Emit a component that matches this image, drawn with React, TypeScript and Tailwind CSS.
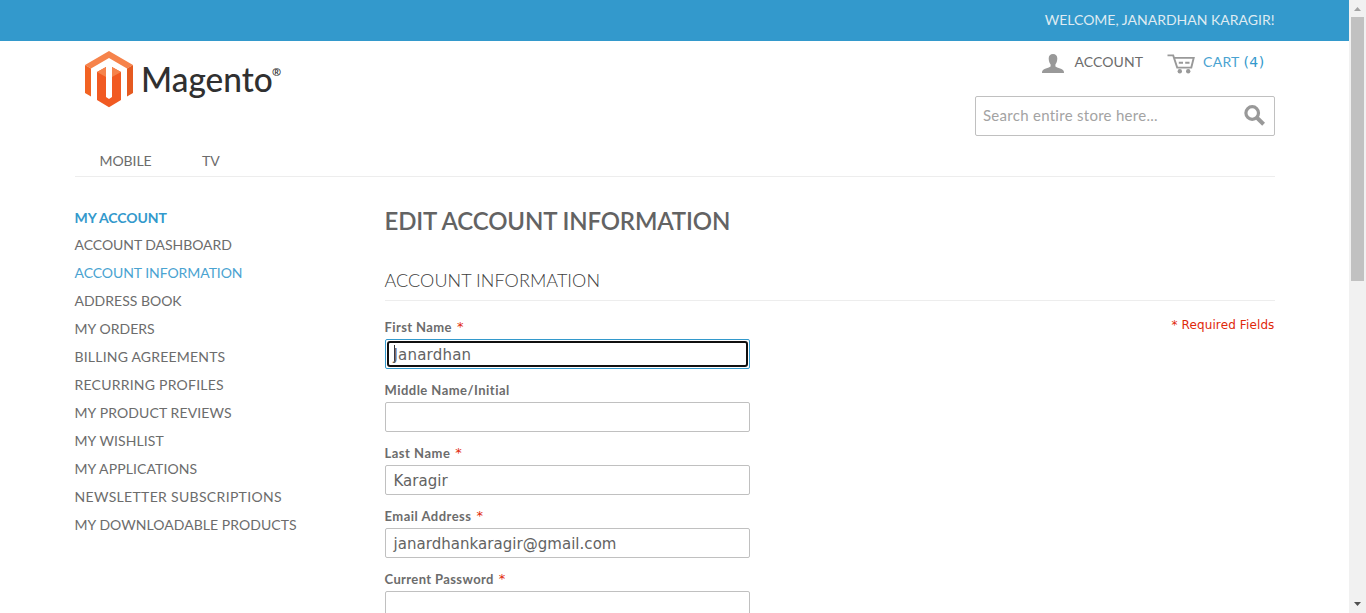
import type { ReactNode } from "react";

const links: [string, string][] = [
  ["ACCOUNT DASHBOARD", "tracking-[-0.05px]"],
  ["ACCOUNT INFORMATION", "tracking-[-0.06px] text-[#4aa3d1]"],
  ["ADDRESS BOOK", "tracking-[0px]"],
  ["MY ORDERS", "tracking-[0.04px]"],
  ["BILLING AGREEMENTS", "tracking-[0.2px]"],
  ["RECURRING PROFILES", "tracking-[0.23px]"],
  ["MY PRODUCT REVIEWS", "tracking-[0.12px]"],
  ["MY WISHLIST", "tracking-[0.1px]"],
  ["MY APPLICATIONS", "tracking-[0.1px]"],
  ["NEWSLETTER SUBSCRIPTIONS", "tracking-[0.32px]"],
  ["MY DOWNLOADABLE PRODUCTS", "tracking-[0.05px]"],
];

function Logo(): ReactNode {
  return (
    <div className="flex h-[56px] items-start">
      <svg width="48" height="57" viewBox="0 0 48 57">
        <path d="M0 14 24 0 48 14 42 17.5 24 7 6 17.5Z" fill="#f6834b" />
        <path d="M0 14 6 17.5V45.5L0 42Z" fill="#f26322" />
        <path d="M48 14 42 17.5V45.5L48 42Z" fill="#e55a20" />
        <path d="M12 21 21 16V46L24 48 27 46V16L36 21V49L24 56.3 12 49Z" fill="#f15a22" />
        <path d="M12 21 21 16V26ZM27 16 36 21 27 26Z" fill="#f6834b" />
      </svg>
      <span className="ml-[8px] mt-[4px] w-[131px] origin-left scale-x-[0.955] whitespace-nowrap text-[35px] font-medium leading-[46px] text-[#303030]">
        Magento
      </span>
      <span className="mt-[14px] font-['Noto_Sans',sans-serif] text-[11px] font-bold leading-[14px] text-[#303030]">®</span>
    </div>
  );
}

function Field({ label, width, required = true, value = "", focused = false }: {
  label: string;
  width: string;
  required?: boolean;
  value?: string;
  focused?: boolean;
}): ReactNode {
  return (
    <div className="h-[63px]">
      <div className="flex h-[23px] text-[13px] font-bold leading-[22px] text-[#6c6c6c]">
        <span className={`whitespace-nowrap ${width}`}>{label}</span>
        {required && <span className="ml-[5px] font-['DejaVu_Sans',sans-serif] text-[13px] font-normal text-[#df280a]">*</span>}
      </div>
      <div className={`h-[30px] w-[365px] rounded-[2px] border p-px ${focused ? "border-[#3399cc]" : "border-[#c0c0c0]"}`}>
        <div className={`flex h-[26px] items-center pt-[2px] font-['DejaVu_Sans',sans-serif] text-[15px] text-[#636363] ${focused ? "rounded-[3px] border-2 border-[#101010] pl-[5px] tracking-[0.2px]" : "pl-[7px] tracking-[0.04px]"}`}>
          {focused && <span className="-mr-px mb-[2px] h-[18px] w-px bg-[#333]" />}
          {value}
        </div>
      </div>
    </div>
  );
}

export default function App(): ReactNode {
  return (
    <div className="flex h-[613px] w-[1366px] overflow-hidden bg-white font-['Lato',sans-serif] text-[14px] text-[#636363]">
      <div className="flex w-[1349px] flex-col">
        <div className="flex h-[41px] shrink-0 items-center justify-end bg-[#3399cc] pb-[2px] pr-[74.5px] text-[#dfebf2]">
          WELCOME, JANARDHAN KARAGIR!
        </div>
        <header className="ml-[74.5px] flex h-[136px] w-[1200px] shrink-0 flex-col border-b border-[#ededed]">
          <div className="flex h-[95px] justify-between">
            <div className="pl-[10.5px] pt-[10px]"><Logo /></div>
            <div className="flex w-[300px] flex-col">
              <div className="flex h-[55px] pl-[67.5px] pt-[12px]">
                <svg className="mt-px" width="22" height="19" viewBox="0 0 22 19" fill="#999">
                  <path d="M11 0c2.700 0 4.300 1.600 4.300 4.600 0 2.600-.8 4.600-1.900 6v1.900c2 1.300 6.100 2 7.600 3.400.8.800 1 1.700 1 3.100H0c0-1.400.2-2.300 1-3.100 1.500-1.400 5.600-2.100 7.600-3.400v-1.900C7.500 9.200 6.700 7.200 6.700 4.600 6.700 1.600 8.300 0 11 0Z" />
                </svg>
                <span className="ml-[10.5px] w-[69px] leading-[18px] tracking-[0.07px] text-[#6c6c6c]">ACCOUNT</span>
                <svg className="ml-[23.5px] mt-px" width="28" height="20" viewBox="0 0 28 20">
                  <path d="M0.500 1.400H6.200L10.200 13.600H24.300L26.700 3.900H7.500" fill="none" stroke="#999" strokeWidth="1.900" />
                  <path d="M11.800 8.800H16M18.200 8.800H22.500" stroke="#999" strokeWidth="2" />
                  <circle cx="12.800" cy="17.300" r="2.200" fill="#999" />
                  <circle cx="21.200" cy="17.300" r="2.200" fill="#999" />
                </svg>
                <span className="ml-[8px] w-[40.500px] leading-[18px] tracking-[0.28px] text-[#4aa3d1]">CART</span>
                <span className="font-['DejaVu_Sans',sans-serif] text-[14px] leading-[18px] tracking-[0.4px] text-[#3399cc]">(4)</span>
              </div>
              <div className="flex h-[40px] items-center justify-between rounded-[2px] border border-[#c0c0c0] pb-[2px] pl-[7.5px] pr-[9px] text-[15px] tracking-[0.28px] text-[#a3a3a3]">
                <span>Search entire store here...</span>
                <svg width="21" height="21" viewBox="0 0 21 21" fill="none" stroke="#999">
                  <circle cx="8.200" cy="8" r="6.300" strokeWidth="3.200" />
                  <path d="m13 12.800 6.600 6.400" strokeWidth="4" />
                </svg>
              </div>
            </div>
          </div>
          <nav className="flex h-[40px] items-center pl-[25px] pt-[8px] tracking-[-0.07px] text-[#6c6c6c]">
            <span className="w-[102.500px]">MOBILE</span>
            <span>TV</span>
          </nav>
        </header>
        <div className="ml-[74.5px] flex w-[1200px]">
          <aside className="w-[310px] pt-[27px] text-[#6c6c6c]">
            <div className="h-[27px] font-bold leading-[28px] tracking-[-0.08px] text-[#3399cc]">MY ACCOUNT</div>
            {links.map(([text, cls]) => (
              <div key={text} className={`h-[28px] leading-[28px] ${cls}`}>{text}</div>
            ))}
          </aside>
          <main className="flex w-[890px] flex-col">
            <h1 className="mt-[29px] h-[30px] text-[24px] font-semibold leading-[30px] tracking-[-0.16px]">EDIT ACCOUNT INFORMATION</h1>
            <h2 className="mt-[25px] h-[40px] border-b border-[#ededed] text-[18px] font-light leading-[38px] tracking-[0.06px] text-[#404040]">ACCOUNT INFORMATION</h2>
            <div className="mt-[15px] flex justify-between">
              <div>
                <Field label="First Name" width="tracking-[0.4px]" value="Janardhan" focused />
                <Field label="Middle Name/Initial" width="tracking-[0.47px]" required={false} />
                <Field label="Last Name" width="tracking-[0.5px]" value="Karagir" />
                <Field label="Email Address" width="tracking-[0.48px]" value="janardhankaragir@gmail.com" />
                <Field label="Current Password" width="tracking-[0.38px]" />
              </div>
              <span className="font-['DejaVu_Sans',sans-serif] text-[12px] leading-[18px] tracking-[0.12px] text-[#df280a]">* Required Fields</span>
            </div>
          </main>
        </div>
      </div>
      <div className="flex w-[17px] flex-col items-center bg-[#f1f1f1]">
        <svg className="shrink-0" width="17" height="17" viewBox="0 0 17 17"><path d="M5 11 8.500 7 12 11Z" fill="#a3a3a3" /></svg>
        <div className="h-[264px] w-[13px] shrink-0 bg-[#c1c1c1]" />
        <svg className="mt-auto shrink-0" width="17" height="17" viewBox="0 0 17 17"><path d="M5 6 12 6 8.500 10Z" fill="#505050" /></svg>
      </div>
    </div>
  );
}
